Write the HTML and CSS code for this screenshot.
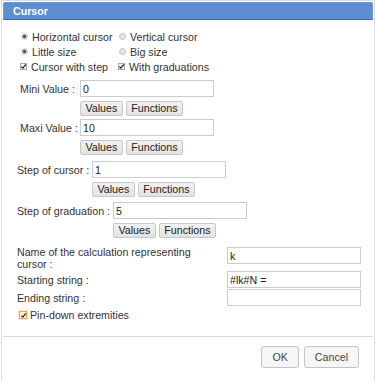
FILE: index.html
```html
<!DOCTYPE html>
<html lang="en">

<head>
    <meta charset="utf8">
    <title>Cursor</title>

    <link rel="stylesheet" href="styles.css">
</head>

<body>
    <div class="dialog">
        <div class="titlebar">Cursor</div>

        <div class="content">
            <div class="options">
                <label class="opt"><input type="radio" name="direction" checked>Horizontal cursor</label>
                <label class="opt second"><input type="radio" name="direction">Vertical cursor</label>
                <label class="opt"><input type="radio" name="size" checked>Little size</label>
                <label class="opt second"><input type="radio" name="size">Big size</label>
                <label class="opt"><span class="check"><svg viewBox="0 0 7 7" width="7" height="7"><path d="M1.3 3.6 L2.9 5.2 L5.8 1.4" /></svg></span>Cursor with step</label>
                <label class="opt second"><span class="check"><svg viewBox="0 0 7 7" width="7" height="7"><path d="M1.3 3.6 L2.9 5.2 L5.8 1.4" /></svg></span>With graduations</label>
            </div>

            <div class="field mini">
                <span class="label">Mini Value :</span>
                <input class="text" value="0">
                <div class="actions">
                    <button>Values</button>
                    <button>Functions</button>
                </div>
                <span class="label">Maxi Value :</span>
                <input class="text" value="10">
                <div class="actions">
                    <button>Values</button>
                    <button>Functions</button>
                </div>
            </div>

            <div class="field step">
                <span class="label">Step of cursor :</span>
                <input class="text" value="1">
                <div class="actions">
                    <button>Values</button>
                    <button>Functions</button>
                </div>
            </div>

            <div class="field graduation">
                <span class="label">Step of graduation :</span>
                <input class="text" value="5">
                <div class="actions">
                    <button>Values</button>
                    <button>Functions</button>
                </div>
            </div>

            <div class="strings">
                <span class="label name">Name of the calculation representing cursor :</span>
                <input class="text top" value="k">
                <span class="label">Starting string :</span>
                <input class="text" value="#lk#N =">
                <span class="label">Ending string :</span>
                <input class="text" value="">
            </div>

            <label class="opt pin"><span class="check focus"><svg viewBox="0 0 7 7" width="7" height="7"><path d="M1.3 3.6 L2.9 5.2 L5.8 1.4" /></svg></span>Pin-down extremities</label>
        </div>

        <div class="footer">
            <button class="big">OK</button>
            <button class="big">Cancel</button>
        </div>
    </div>
</body>

</html>
```

FILE: styles.css
```css
* {
    box-sizing: border-box;
}

body {
    margin: 0;
    font-family: "Liberation Sans", Arial, sans-serif;
    font-size: 8pt;
    color: #333;
    background: white;
}

.dialog {
    margin-left: 1px;
    width: 374px;
    height: 381px;
    border: 1px solid #dddddd;
    border-bottom: 0 none;
    padding: 1px;
}

.titlebar {
    height: 18px;
    line-height: 16px;
    padding-left: 9px;
    background-color: #5f8dd1;
    border: 1px solid #6b97d6;
    border-bottom: 1px solid #2f67bd;
    border-radius: 2px 2px 0 0;
    color: white;
    font-weight: bold;
}

.content {
    padding: 9px 0 0 14px;
    height: 317px;
    border-bottom: 1px solid #dddddd;
}

.options {
    display: grid;
    grid-template-columns: 98px auto;
    margin-left: 3px;
}

.opt {
    display: flex;
    align-items: center;
    height: 15px;
    column-gap: 4px;
}

.opt input[type=radio] {
    appearance: none;
    -webkit-appearance: none;
    margin: 0 0 0 1px;
    width: 7px;
    height: 7px;
    border-radius: 50%;
    border: 1px solid #c4c4c4;
    background: #e4e4e4;
}

.opt input[type=radio]:checked {
    background: radial-gradient(circle, #555 0 1.4px, #e4e4e4 2.2px);
}

.check {
    display: flex;
    width: 7px;
    height: 7px;
    border: 1px solid #a9a9a9;
    background: #f4f4f4;
}

.check svg {
    margin: -1px;
    fill: none;
    stroke: #222;
    stroke-width: 1.2;
}

.check.focus {
    width: 8px;
    height: 8px;
    border: 1px solid #f0a848;
    box-shadow: 0 0 0 0.5px #f6c890;
}

.check.focus svg {
    margin: -0.5px;
}

.field {
    display: grid;
    align-items: center;
    margin-top: 6px;
}

.field.mini {
    margin-left: 3px;
    grid-template-columns: 60px 134px;
}

.field.step {
    grid-template-columns: 75px 134px;
    margin-top: 3px;
}

.field.graduation {
    grid-template-columns: 96px 134px;
    margin-top: 2px;
}

.field .actions {
    grid-column: 2;
    display: flex;
    column-gap: 3px;
    margin: 4px 0 3px;
}

input.text {
    width: 134px;
    height: 17px;
    margin: 0;
    padding: 0 2px;
    border: 1px solid #cccccc;
    font-family: inherit;
    font-size: 8pt;
    color: #222;
    background: white;
}

button {
    font-family: inherit;
    font-size: 8pt;
    color: #222;
    height: 15px;
    padding: 0 4.5px;
    line-height: 13px;
    background: linear-gradient(#f2f2f2, #e3e3e3);
    border: 1px solid #c8c8c8;
    border-radius: 2px;
}

.strings {
    display: grid;
    grid-template-columns: 210px 134px;
    row-gap: 1px;
    margin-top: 6px;
    align-items: center;
}

.strings .label {
    max-width: 186px;
    line-height: 12px;
}

.strings .name {
    line-height: 11.5px;
    align-self: start;
}

.strings input.top {
    align-self: start;
}

.opt.pin {
    margin: 4px 0 0 2px;
    height: 10px;
    column-gap: 3px;
}

.footer {
    display: flex;
    justify-content: flex-end;
    column-gap: 5px;
    padding: 9px 14px 0 0;
}

button.big {
    height: 22px;
    padding: 0 10px;
    line-height: 20px;
    color: #454545;
    background: #f6f6f6;
    border: 1px solid #c5c5c5;
    border-radius: 3px;
}
```
